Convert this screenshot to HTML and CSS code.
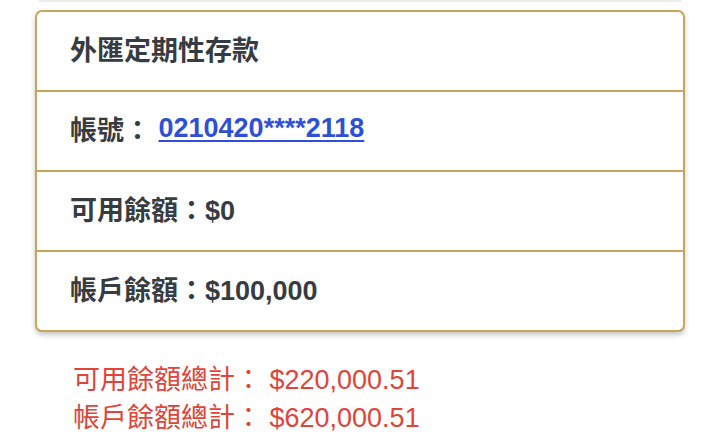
FILE: index.html
```html
<!DOCTYPE html>
<html lang="zh-Hant">
<head>
    <meta charset="UTF-8">
    <meta name="viewport" content="width=device-width, initial-scale=1.0">
    <title>外匯定期性存款</title>
    <link rel="stylesheet" href="styles.css">
</head>
<body>
    <div class="page">
        <!-- bottom of the previous card, cut off by the viewport -->
        <div class="prev-card"></div>

        <div class="account-card">
            <div class="account-row">外匯定期性存款</div>
            <div class="account-row">帳號：&nbsp;<a href="#" class="account-link">0210420****2118</a></div>
            <div class="account-row">可用餘額：$0</div>
            <div class="account-row">帳戶餘額：$100,000</div>
        </div>

        <div class="totals">
            <div>可用餘額總計： $220,000.51</div>
            <div>帳戶餘額總計： $620,000.51</div>
        </div>
    </div>
</body>
</html>
```

FILE: styles.css
```css
body {
    margin: 0;
    background-color: #fff;
    font-family: "Liberation Sans", "Noto Sans CJK TC", sans-serif;
}

.page {
    padding: 0 35px;
}

.prev-card {
    height: 2px;
    margin: 0 4px 8px;
    background-color: #ececec;
}

.account-card {
    border: 2px solid #c9a45a;
    border-radius: 7px;
    background-color: #fff;
    box-shadow: 0 3px 5px rgba(0, 0, 0, 0.22);
}

.account-row {
    height: 80px;
    box-sizing: border-box;
    display: flex;
    align-items: center;
    padding: 0 0 5px 33px;
    font-size: 27px;
    font-weight: bold;
    color: #373c42;
    border-top: 2px solid #c9a45a;
}

.account-row:first-child {
    border-top: none;
    height: 78px;
}

.account-link {
    color: #2f4fd6;
    text-decoration: underline;
    text-underline-offset: 3px;
}

.totals {
    padding: 29px 0 0 38px;
    font-size: 27px;
    line-height: 38px;
    color: #e0443a;
}
```
